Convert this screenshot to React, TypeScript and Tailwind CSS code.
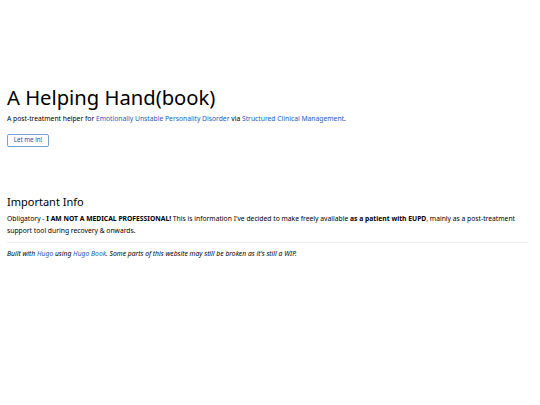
import React from "react";

const App: React.FC = () => {
  return (
    <div
      className="min-h-screen bg-white px-[7px] text-[#000]"
      style={{ fontFamily: '"Noto Sans", sans-serif' }}
    >
      {/* Hero */}
      <div className="pt-[84px]">
        <h1 className="text-[20.2px] leading-[26px] font-normal">A Helping Hand(book)</h1>
        <p className="mt-[4px] text-[6.75px] leading-[10px]">
          A post-treatment helper for{" "}
          <a className="text-[#1c5cb8]">Emotionally Unstable Personality Disorder</a> via{" "}
          <a className="text-[#1c5cb8]">Structured Clinical Management</a>.
        </p>
        <button className="mt-[1px] h-[13px] w-[42px] rounded-[2px] border border-[#7d9fd4] text-[6.2px] leading-[8px] text-[#1c4f9c]">
          Let me in!
        </button>
      </div>

      {/* Info */}
      <div className="mt-[47px]">
        <h2 className="text-[11px] leading-[14px] font-normal">Important Info</h2>
        <p className="mt-[4px] text-[6.75px] leading-[12px]">
          Obligatory - <b>I AM NOT A MEDICAL PROFESSIONAL!</b> This is information I've decided to make
          freely available <b>as a patient with EUPD</b>, mainly as a post-treatment support tool during
          recovery &amp; onwards.
        </p>
        <hr className="my-[5px] mr-[5px] border-[#eee]" />
        <p className="text-[6.75px] italic leading-[12px]">
          Built with <a className="text-[#1c5cb8]">Hugo</a> using{" "}
          <a className="text-[#1c5cb8]">Hugo Book</a>. Some parts of this website may still be broken as
          it's still a WIP.
        </p>
      </div>
    </div>
  );
};

export default App;
